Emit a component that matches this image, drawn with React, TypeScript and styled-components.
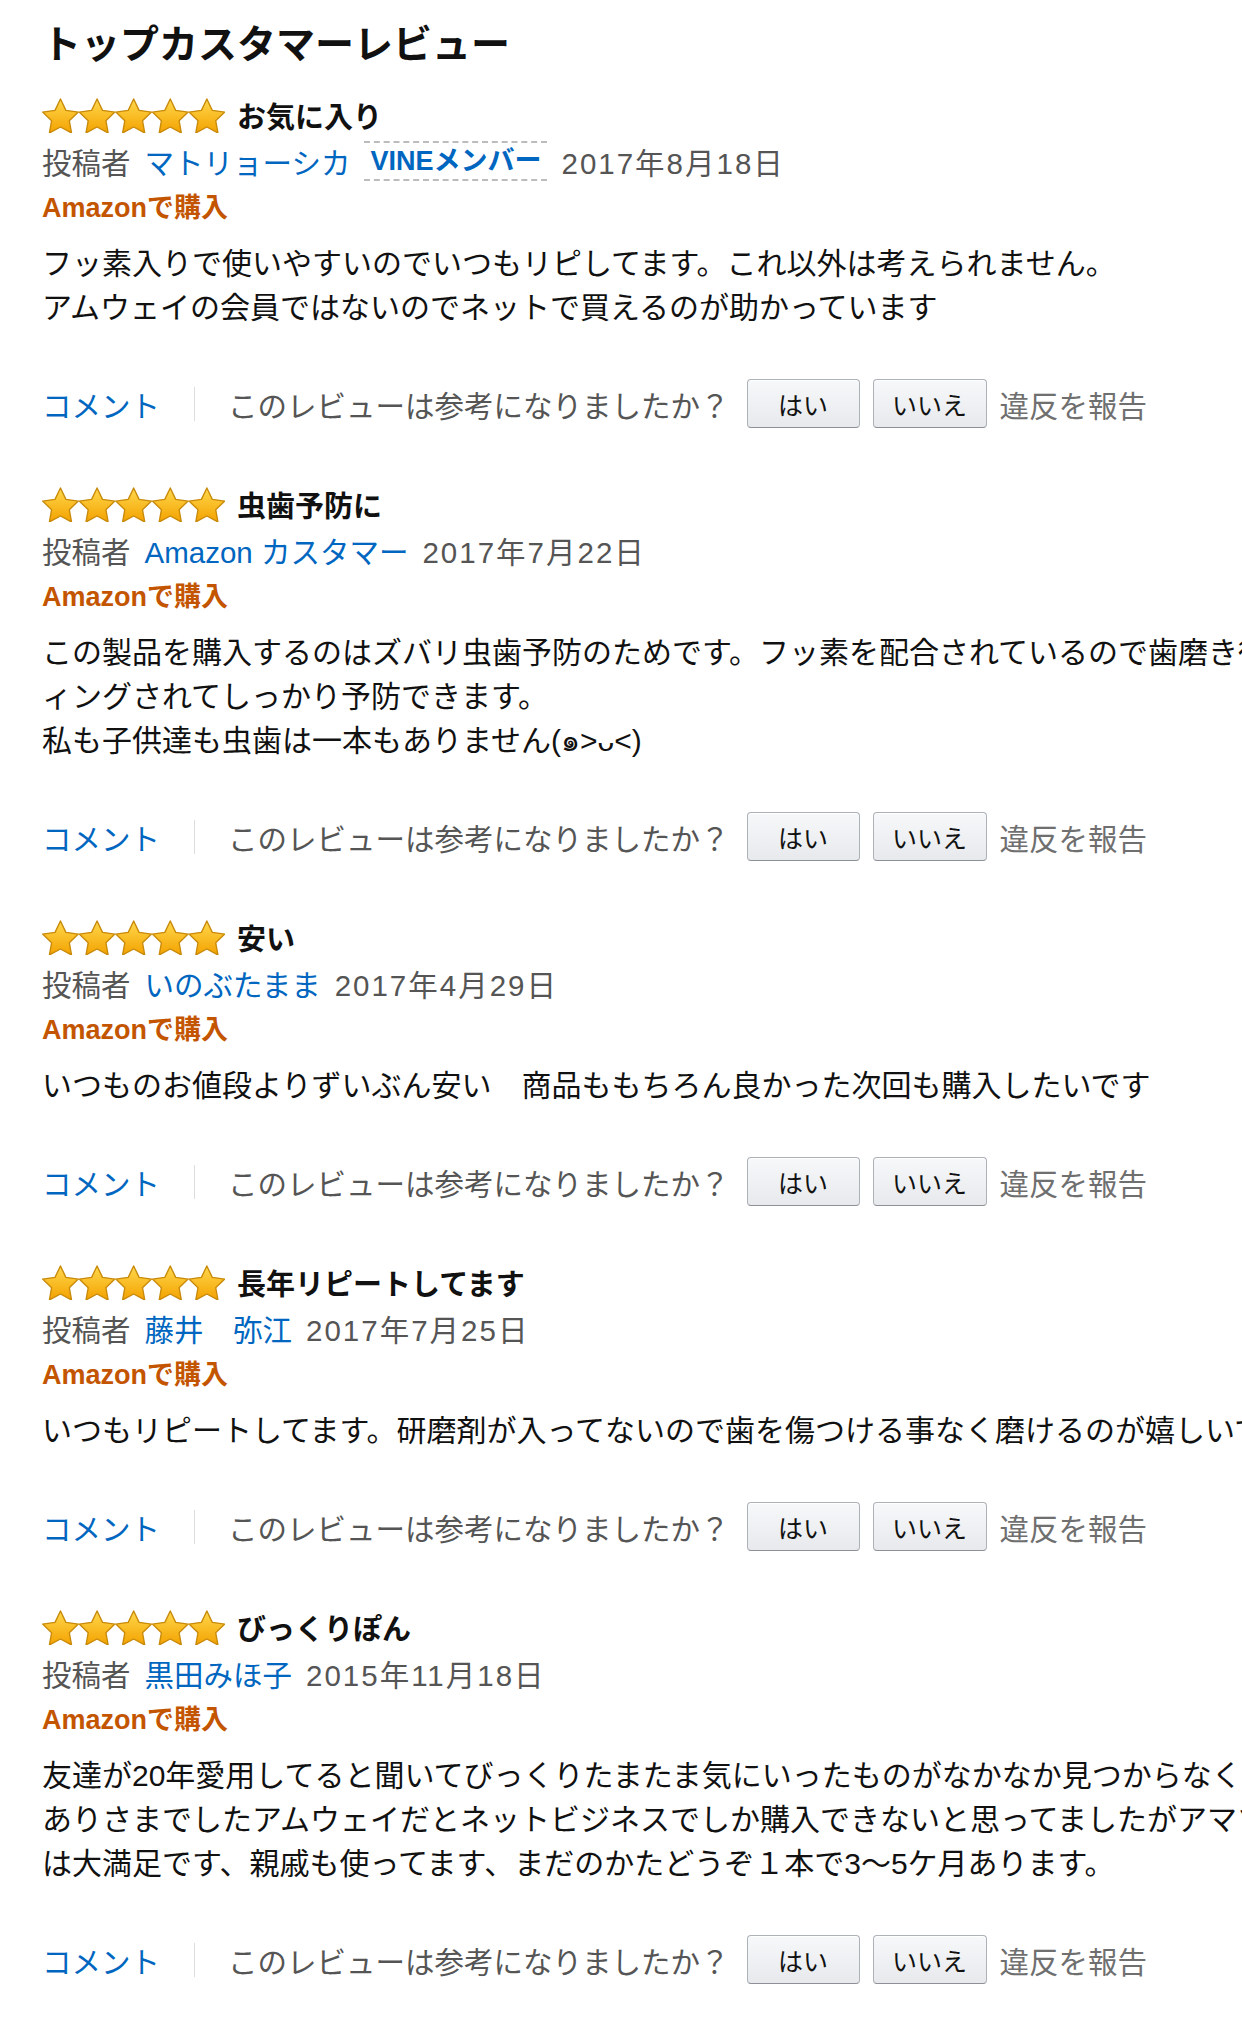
import React from 'react';
import styled, { createGlobalStyle } from 'styled-components';

type Review = {
  title: string;
  author: string;
  vine?: boolean;
  date: string;
  body: string[];
};

const reviews: Review[] = [
  {
    title: 'お気に入り',
    author: 'マトリョーシカ',
    vine: true,
    date: '2017年8月18日',
    body: [
      'フッ素入りで使いやすいのでいつもリピしてます。これ以外は考えられません。',
      'アムウェイの会員ではないのでネットで買えるのが助かっています',
    ],
  },
  {
    title: '虫歯予防に',
    author: 'Amazon カスタマー',
    date: '2017年7月22日',
    body: [
      'この製品を購入するのはズバリ虫歯予防のためです。フッ素を配合されているので歯磨き後のコーテ',
      'ィングされてしっかり予防できます。',
      '私も子供達も虫歯は一本もありません(๑˃ᴗ˂)',
    ],
  },
  {
    title: '安い',
    author: 'いのぶたまま',
    date: '2017年4月29日',
    body: ['いつものお値段よりずいぶん安い　商品ももちろん良かった次回も購入したいです'],
  },
  {
    title: '長年リピートしてます',
    author: '藤井　弥江',
    date: '2017年7月25日',
    body: ['いつもリピートしてます。研磨剤が入ってないので歯を傷つける事なく磨けるのが嬉しいです。'],
  },
  {
    title: 'びっくりぽん',
    author: '黒田みほ子',
    date: '2015年11月18日',
    body: [
      '友達が20年愛用してると聞いてびっくりたまたま気にいったものがなかなか見つからなくて',
      'ありさまでしたアムウェイだとネットビジネスでしか購入できないと思ってましたがアマゾンで買えて今回',
      'は大満足です、親戚も使ってます、まだのかたどうぞ１本で3〜5ケ月あります。',
    ],
  },
];

const FONT = `"Liberation Sans", "Noto Sans CJK JP", sans-serif`;

const GlobalStyle = createGlobalStyle`
  html, body {
    margin: 0;
    padding: 0;
    background: #fff;
    overflow: hidden;
  }
  body {
    font-family: ${FONT};
    color: #111;
  }
`;

const Page = styled.main`
  width: 1242px;
  overflow: hidden;
  padding: 20px 0 0 42px;
  box-sizing: border-box;
`;

const Heading = styled.h2`
  margin: 0 0 22px;
  font-size: 39px;
  line-height: 50px;
  font-weight: 700;
  color: #111;
`;

const List = styled.div`
  display: flex;
  flex-direction: column;
  gap: 53px;
`;

const Item = styled.section`
  display: flex;
  flex-direction: column;
`;

const Header = styled.div`
  display: flex;
  align-items: center;
  height: 46px;
  gap: 12px;
`;

const Title = styled.span`
  font-size: 29px;
  font-weight: 700;
  color: #111;
`;

const Meta = styled.div`
  display: flex;
  align-items: center;
  height: 45px;
  font-size: 29.5px;
  color: #555;
  white-space: nowrap;
  gap: 14px;
`;

const Author = styled.span`
  color: #0066c0;
`;

const PostDate = styled.span`
  letter-spacing: 2px;
`;

const Vine = styled.span`
  font-size: 27px;
  font-weight: 700;
  color: #0066c0;
  padding: 4px 6px;
  line-height: 28px;
  border-top: 2px dashed #bcbcbc;
  border-bottom: 2px dashed #bcbcbc;
`;

const Verified = styled.div`
  height: 45px;
  display: flex;
  align-items: center;
  font-size: 27px;
  font-weight: 700;
  color: #c45500;
`;

const Body = styled.div`
  margin-top: 14px;
  font-size: 30px;
  line-height: 44px;
  white-space: nowrap;
  color: #111;
`;

const Actions = styled.div`
  display: flex;
  align-items: center;
  height: 49px;
  margin-top: 49px;
  font-size: 29.5px;
  white-space: nowrap;
`;

const CommentLink = styled.span`
  color: #0066c0;
`;

const Divider = styled.span`
  width: 1px;
  height: 34px;
  background: #ddd;
  margin: 0 33px 0 34px;
`;

const Question = styled.span`
  color: #555;
  margin-right: 17px;
`;

const VoteButton = styled.button<{ $w: number }>`
  width: ${(p) => p.$w}px;
  height: 49px;
  margin-right: 13px;
  padding: 0;
  font-family: ${FONT};
  font-size: 25px;
  color: #111;
  border: 1px solid #adb1b8;
  border-bottom-color: #8d9096;
  border-radius: 4px;
  background: linear-gradient(to bottom, #f7f8fa, #e7e9ec);
  box-shadow: inset 0 1px 0 #fff;
`;

const Report = styled.span`
  color: #6f6f6f;
`;

const Stars = () => (
  <svg width="183" height="36" viewBox="0 0 183 36">
    <defs>
      <linearGradient id="starFill" x1="0" y1="0" x2="0" y2="1">
        <stop offset="0" stopColor="#ffd84d" />
        <stop offset="1" stopColor="#f3a200" />
      </linearGradient>
    </defs>
    {[0, 1, 2, 3, 4].map((i) => (
      <path
        key={i}
        transform={`translate(${i * 36.6 - 1.6} 0.6) scale(1.7)`}
        d="M11.8 0.8l3.2 6.7 7.3 1-5.3 5.1 1.3 7.2-6.5-3.5-6.5 3.5 1.3-7.2L1.3 8.5l7.3-1z"
        fill="url(#starFill)"
        stroke="#c98a0a"
        strokeWidth="0.8"
        strokeLinejoin="round"
      />
    ))}
  </svg>
);

const ReviewItem = ({ review }: { review: Review }) => (
  <Item>
    <Header>
      <Stars />
      <Title>{review.title}</Title>
    </Header>
    <Meta>
      <span>投稿者</span>
      <Author>{review.author}</Author>
      {review.vine && <Vine>VINEメンバー</Vine>}
      <PostDate>{review.date}</PostDate>
    </Meta>
    <Verified>Amazonで購入</Verified>
    <Body>
      {review.body.map((line, i) => (
        <div key={i}>{line}</div>
      ))}
    </Body>
    <Actions>
      <CommentLink>コメント</CommentLink>
      <Divider />
      <Question>このレビューは参考になりましたか？</Question>
      <VoteButton $w={113}>はい</VoteButton>
      <VoteButton $w={114}>いいえ</VoteButton>
      <Report>違反を報告</Report>
    </Actions>
  </Item>
);

export default function App() {
  return (
    <>
      <GlobalStyle />
      <Page>
        <Heading>トップカスタマーレビュー</Heading>
        <List>
          {reviews.map((r, i) => (
            <ReviewItem key={i} review={r} />
          ))}
        </List>
      </Page>
    </>
  );
}
